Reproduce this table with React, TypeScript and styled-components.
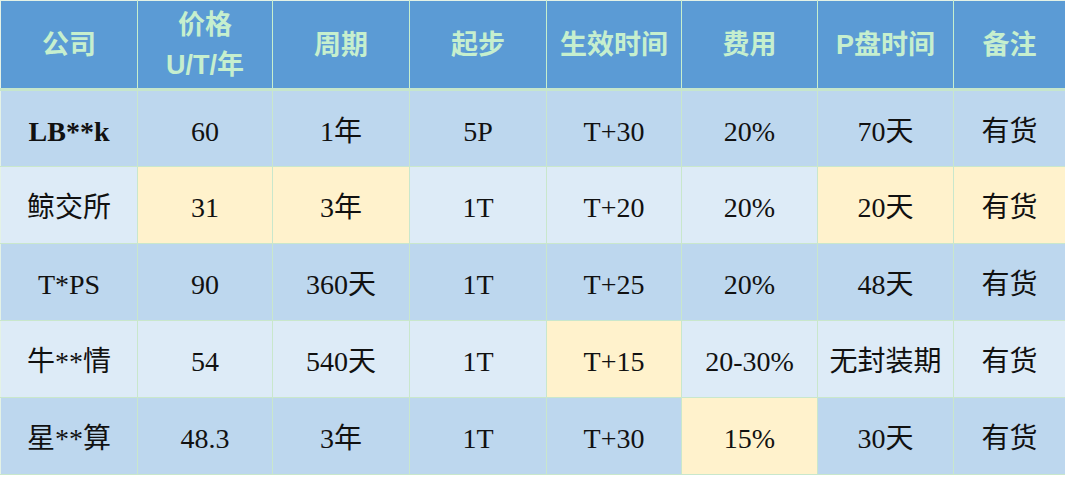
import styled, { createGlobalStyle } from 'styled-components';

const GlobalStyle = createGlobalStyle`
  html, body {
    margin: 0;
    padding: 0;
    background: #ffffff;
  }
`;

const Table = styled.table`
  width: 1065px;
  table-layout: fixed;
  border-collapse: collapse;
  border-top: 1px solid #e4f2e6;
  border-left: 1px solid #e4f2e6;
`;

const HeadCell = styled.th`
  box-sizing: border-box;
  height: 89px;
  padding: 0;
  background: #5b9bd5;
  color: #c6efce;
  font-family: 'Liberation Sans', 'Noto Sans CJK SC', sans-serif;
  font-weight: 700;
  font-size: 27px;
  line-height: 40px;
  text-align: center;
  vertical-align: middle;
  border-right: 1px solid #c6efce;
  border-bottom: 3px solid #c6e6cc;
  overflow: hidden;
`;

type Tone = 'dark' | 'light' | 'yellow';

const toneColors: Record<Tone, string> = {
  dark: '#bdd7ee',
  light: '#ddebf7',
  yellow: '#fff2cc',
};

const Cell = styled.td<{ $tone: Tone; $bold?: boolean }>`
  box-sizing: border-box;
  height: 77px;
  padding: 6px 0 0;
  background: ${({ $tone }) => toneColors[$tone]};
  color: #111111;
  font-family: 'Liberation Serif', 'Noto Sans CJK SC', serif;
  font-weight: ${({ $bold }) => ($bold ? 700 : 400)};
  font-size: 28px;
  line-height: 32px;
  text-align: center;
  vertical-align: middle;
  white-space: nowrap;
  border-right: 1.5px solid #c9e7cc;
  border-bottom: 1.5px solid #c9e7cc;
`;

const widths = [137, 135, 137, 137, 135, 136, 136, 112];

const headers: React.ReactNode[] = [
  '公司',
  <>
    价格
    <br />
    U/T/年
  </>,
  '周期',
  '起步',
  '生效时间',
  '费用',
  'P盘时间',
  '备注',
];

type Row = { cells: string[]; yellow: number[]; bold?: boolean };

const rows: Row[] = [
  { cells: ['LB**k', '60', '1年', '5P', 'T+30', '20%', '70天', '有货'], yellow: [], bold: true },
  { cells: ['鲸交所', '31', '3年', '1T', 'T+20', '20%', '20天', '有货'], yellow: [1, 2, 6, 7] },
  { cells: ['T*PS', '90', '360天', '1T', 'T+25', '20%', '48天', '有货'], yellow: [] },
  { cells: ['牛**情', '54', '540天', '1T', 'T+15', '20-30%', '无封装期', '有货'], yellow: [4] },
  { cells: ['星**算', '48.3', '3年', '1T', 'T+30', '15%', '30天', '有货'], yellow: [5] },
];

const App = () => (
  <>
    <GlobalStyle />
    <Table>
      <colgroup>
        {widths.map((w, i) => (
          <col key={i} style={{ width: w }} />
        ))}
      </colgroup>
      <thead>
        <tr>
          {headers.map((h, i) => (
            <HeadCell key={i}>{h}</HeadCell>
          ))}
        </tr>
      </thead>
      <tbody>
        {rows.map((row, r) => (
          <tr key={r}>
            {row.cells.map((c, i) => (
              <Cell
                key={i}
                $tone={row.yellow.includes(i) ? 'yellow' : r % 2 === 0 ? 'dark' : 'light'}
                $bold={row.bold && i === 0}
              >
                {c}
              </Cell>
            ))}
          </tr>
        ))}
      </tbody>
    </Table>
  </>
);

export default App;
